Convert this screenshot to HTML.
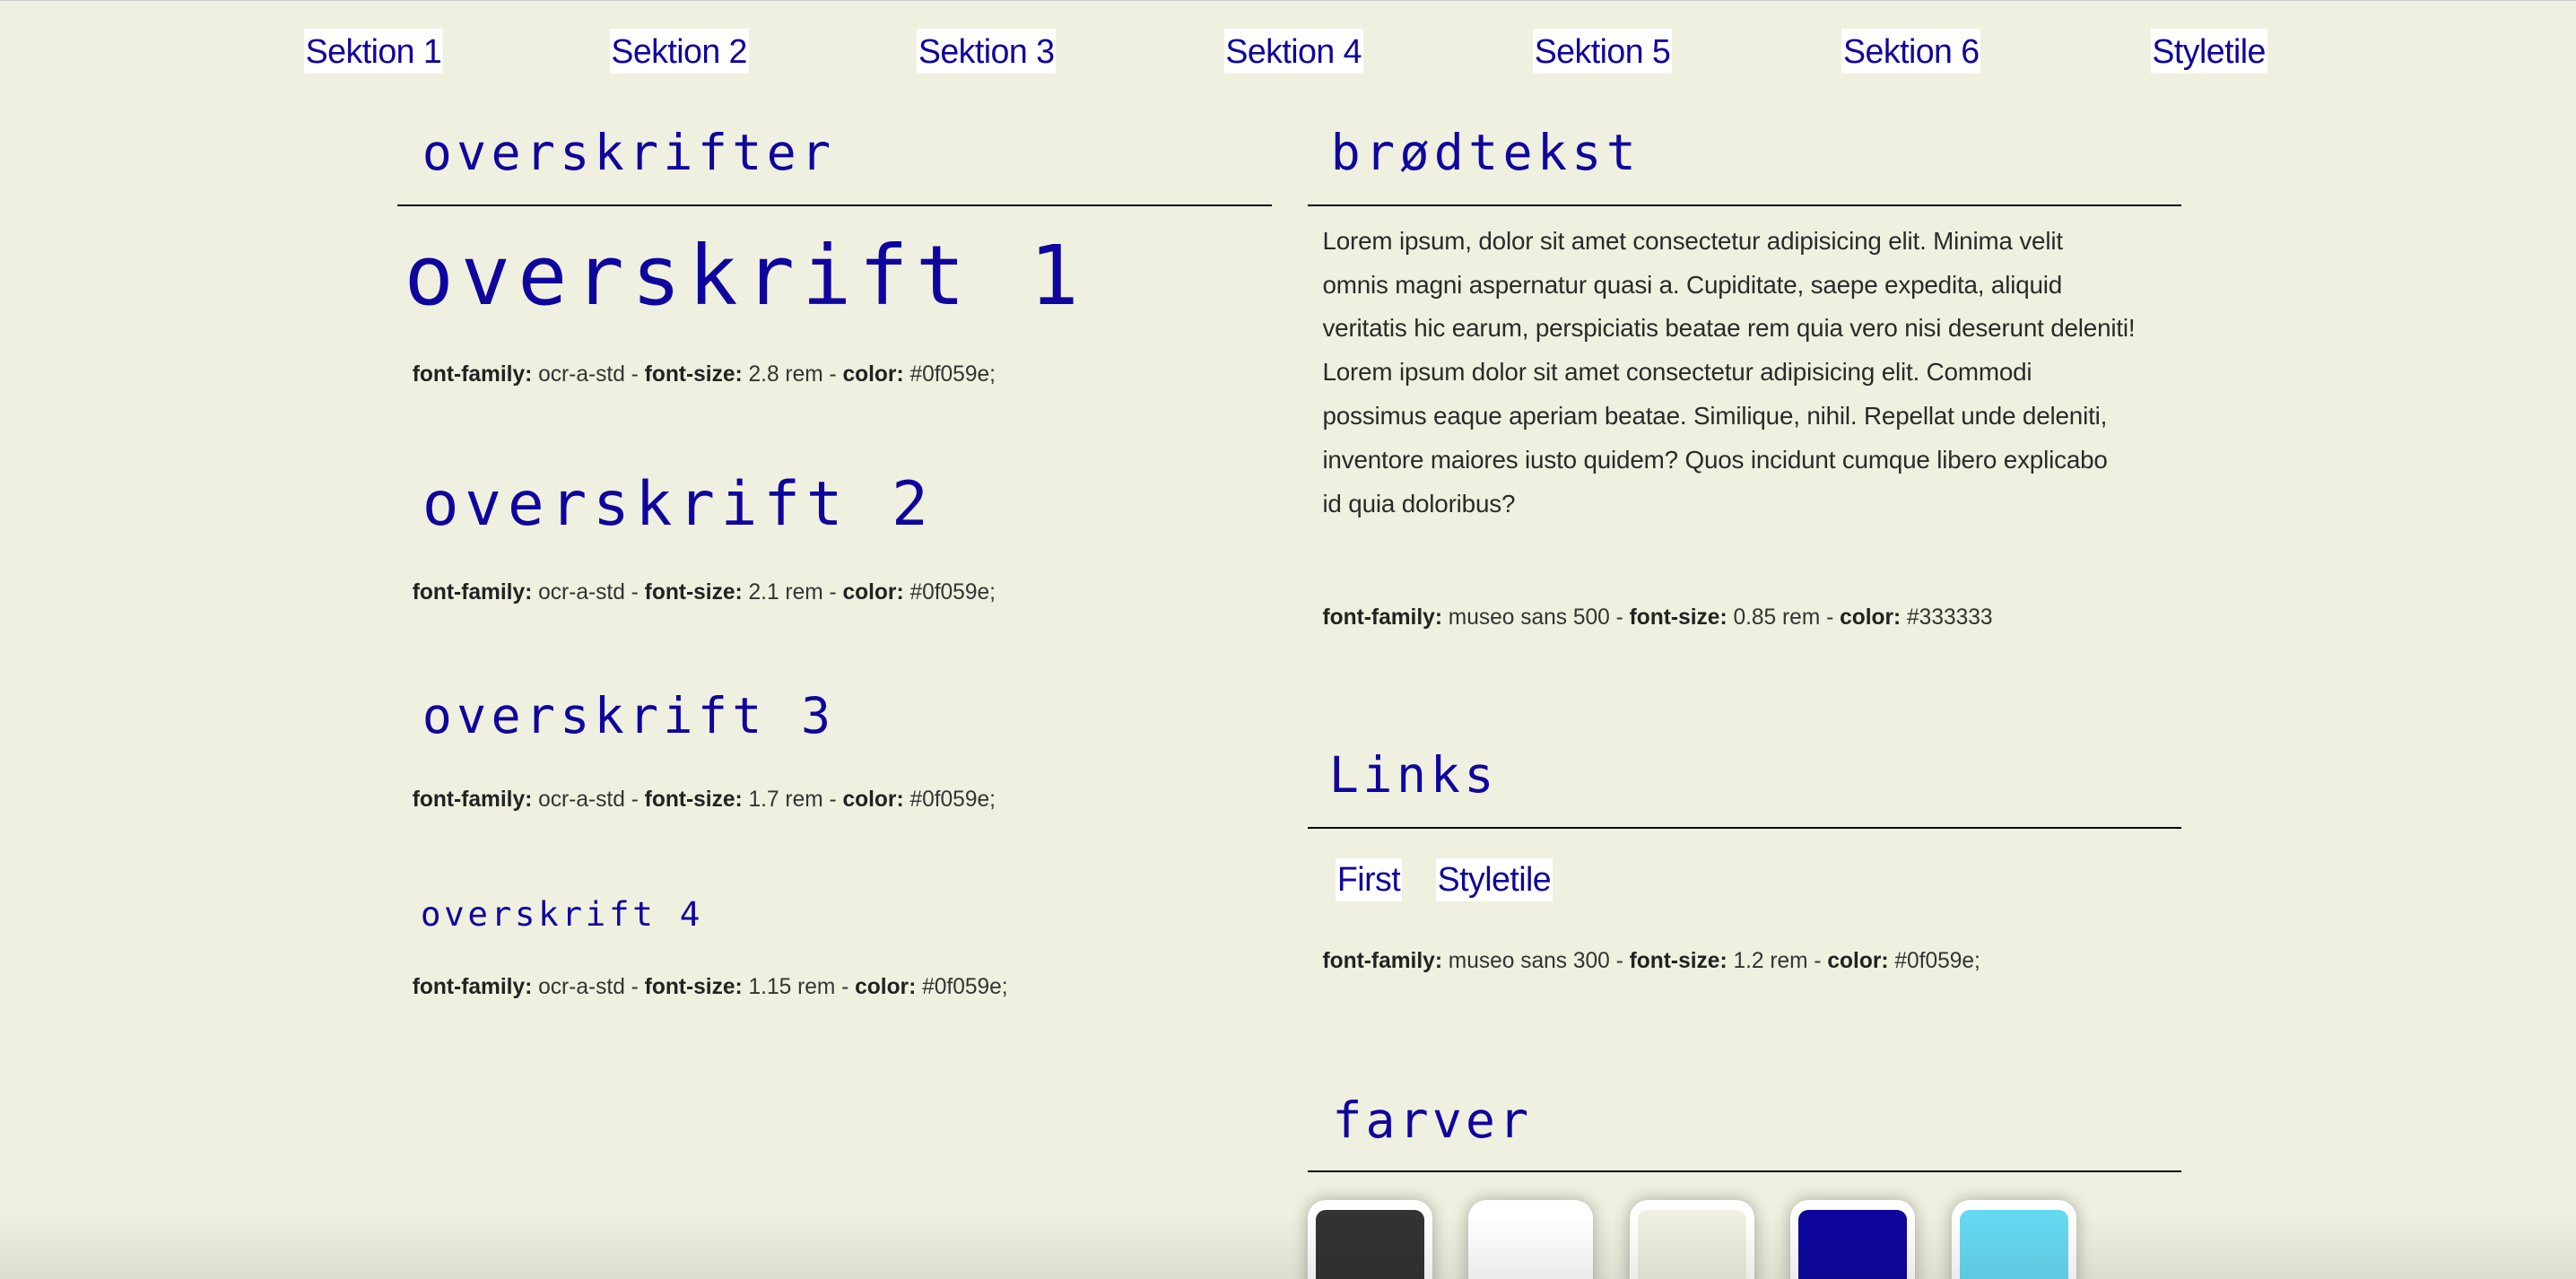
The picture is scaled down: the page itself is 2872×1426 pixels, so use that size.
<!DOCTYPE html>
<html><head><meta charset="utf-8"><style>
html,body{margin:0;padding:0;background:#f0f0e0;overflow:hidden;width:2872px;height:1426px}
#w{zoom:1.8316;position:relative;width:1568px;height:779px;border-top:1px solid #ccc;box-sizing:border-box}
.a{position:absolute;white-space:nowrap;line-height:1}
.nav{position:absolute;top:17px;height:27px;line-height:28px;background:#fff;color:#0f059e;font-family:"Liberation Sans",sans-serif;font-size:20.5px;padding:0 1px;letter-spacing:-0.3px}
.m{font-family:"DejaVu Sans Mono","Liberation Mono",monospace;color:#0f059e}
.d{font-family:"Liberation Sans",sans-serif;font-size:13.4px;color:#333}
.d b{color:#222}
.hr{position:absolute;height:1px;background:#000}
.sw{position:absolute;top:730px;width:66px;height:60px;border:5px solid #fff;border-bottom:0;border-radius:11px 11px 0 0;box-shadow:0 0 10px rgba(0,0,0,.3)}
#sh{position:absolute;left:0;right:0;bottom:0;height:40px;background:linear-gradient(rgba(0,0,0,0),rgba(0,0,0,.08))}
p{margin:0}
</style></head><body><div id="w">
<span class="nav" style="left:185px">Sektion 1</span>
<span class="nav" style="left:371px">Sektion 2</span>
<span class="nav" style="left:558px">Sektion 3</span>
<span class="nav" style="left:745px">Sektion 4</span>
<span class="nav" style="left:933px">Sektion 5</span>
<span class="nav" style="left:1121px">Sektion 6</span>
<span class="nav" style="left:1309px">Styletile</span>

<div class="a m" style="left:257px;top:77.6px;font-size:30px;letter-spacing:2.9px">overskrifter</div>
<div class="hr" style="left:242px;top:124px;width:532px"></div>
<div class="a m" style="left:246px;top:142.7px;font-size:50px;letter-spacing:4.5px">overskrift 1</div>
<div class="a d" style="left:251px;top:221px"><b>font-family:</b> ocr-a-std - <b>font-size:</b> 2.8 rem - <b>color:</b> #0f059e;</div>
<div class="a m" style="left:257px;top:287.7px;font-size:37px;letter-spacing:3.7px">overskrift 2</div>
<div class="a d" style="left:251px;top:354px"><b>font-family:</b> ocr-a-std - <b>font-size:</b> 2.1 rem - <b>color:</b> #0f059e;</div>
<div class="a m" style="left:257px;top:420.6px;font-size:30px;letter-spacing:2.9px">overskrift 3</div>
<div class="a d" style="left:251px;top:480px"><b>font-family:</b> ocr-a-std - <b>font-size:</b> 1.7 rem - <b>color:</b> #0f059e;</div>
<div class="a m" style="left:256px;top:545.7px;font-size:20.5px;letter-spacing:2px">overskrift 4</div>
<div class="a d" style="left:251px;top:594px"><b>font-family:</b> ocr-a-std - <b>font-size:</b> 1.15 rem - <b>color:</b> #0f059e;</div>

<div class="a m" style="left:810px;top:77.6px;font-size:30px;letter-spacing:2.9px">brødtekst</div>
<div class="hr" style="left:796px;top:124px;width:532px"></div>
<p class="a" style="left:805px;top:133px;font-family:'Liberation Sans',sans-serif;font-size:15.2px;line-height:26.7px;color:#2a2a2a;letter-spacing:-0.1px">Lorem ipsum, dolor sit amet consectetur adipisicing elit. Minima velit<br>omnis magni aspernatur quasi a. Cupiditate, saepe expedita, aliquid<br>veritatis hic earum, perspiciatis beatae rem quia vero nisi deserunt deleniti!<br>Lorem ipsum dolor sit amet consectetur adipisicing elit. Commodi<br>possimus eaque aperiam beatae. Similique, nihil. Repellat unde deleniti,<br>inventore maiores iusto quidem? Quos incidunt cumque libero explicabo<br>id quia doloribus?</p>
<div class="a d" style="left:805px;top:369px"><b>font-family:</b> museo sans 500 - <b>font-size:</b> 0.85 rem - <b>color:</b> #333333</div>
<div class="a m" style="left:809px;top:456.6px;font-size:30px;letter-spacing:2.5px">Links</div>
<div class="hr" style="left:796px;top:503px;width:532px"></div>
<span class="nav" style="left:813px;top:522px;height:26px;line-height:26px">First</span>
<span class="nav" style="left:874px;top:522px;height:26px;line-height:26px">Styletile</span>
<div class="a d" style="left:805px;top:578px"><b>font-family:</b> museo sans 300 - <b>font-size:</b> 1.2 rem - <b>color:</b> #0f059e;</div>
<div class="a m" style="left:811px;top:666.6px;font-size:30px;letter-spacing:2.2px">farver</div>
<div class="hr" style="left:796px;top:712px;width:532px"></div>

<div class="sw" style="left:796px;background:#fff"><div style="margin:1px 0 0 0;height:60px;background:#333;border-radius:6px 6px 0 0"></div></div>
<div class="sw" style="left:894px;background:#fff"></div>
<div class="sw" style="left:992px;background:#fff"><div style="margin:1px 0 0 0;height:60px;background:#f0f0e0;border-radius:6px 6px 0 0"></div></div>
<div class="sw" style="left:1090px;background:#fff"><div style="margin:1px 0 0 0;height:60px;background:#0f059e;border-radius:6px 6px 0 0"></div></div>
<div class="sw" style="left:1188px;background:#fff"><div style="margin:1px 0 0 0;height:60px;background:#66d9f2;border-radius:6px 6px 0 0"></div></div>
<div id="sh"></div>
</div></body></html>
